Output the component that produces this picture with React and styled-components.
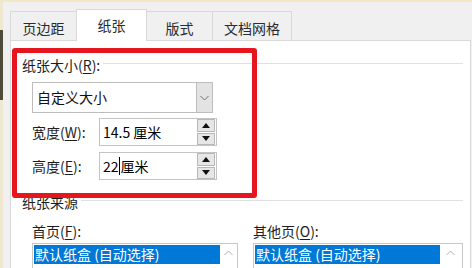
import React from "react";
import styled, { createGlobalStyle } from "styled-components";

const GlobalStyle = createGlobalStyle`
  html, body {
    margin: 0;
    padding: 0;
  }
  body {
    font-family: "Noto Sans CJK SC", "Noto Sans", sans-serif;
    background: #f0f0f0;
    overflow: hidden;
  }
  * {
    box-sizing: border-box;
  }
`;

const Frame = styled.div`
  display: flex;
  width: 472px;
  height: 268px;
  overflow: hidden;
`;

const Edge = styled.div`
  width: 3px;
  flex-shrink: 0;
  background: linear-gradient(
    to bottom,
    #efe7cf 0,
    #efe7cf 30px,
    #4d4b3a 30px,
    #4d4b3a 100px,
    #efe7cf 100px
  );
`;

const Dialog = styled.div`
  flex: 1;
  display: flex;
  flex-direction: column;
  background: #f0f0f0;
  border-top: 2px solid #f3e7c6;
  padding-left: 7px;
  padding-right: 2px;
`;

const TabRow = styled.div`
  display: flex;
  align-items: flex-end;
  height: 38px;
  flex-shrink: 0;
  position: relative;
  z-index: 2;
`;

const Tab = styled.div`
  width: ${(p) => p.$w}px;
  height: ${(p) => (p.$active ? 32 : 29)}px;
  margin-bottom: ${(p) => (p.$active ? -1 : 0)}px;
  margin-left: ${(p) => (p.$first ? 0 : -1)}px;
  padding-top: ${(p) => (p.$active ? 2 : 3)}px;
  border: 1px solid #d9d9d9;
  border-bottom: none;
  background: ${(p) => (p.$active ? "#ffffff" : "#f0f0f0")};
  color: #2b2b2b;
  font-size: 14px;
  line-height: 26px;
  text-align: center;
  position: relative;
  z-index: ${(p) => (p.$active ? 3 : 1)};
`;

const Panel = styled.div`
  flex: 1;
  position: relative;
  background: #ffffff;
  border: 1px solid #d9d9d9;
  padding: 14px 7px 0 11px;
`;

const GroupHeader = styled.div`
  display: flex;
  align-items: center;
  gap: 3px;
  height: 20px;
  margin-top: ${(p) => p.$top || 0}px;
`;

const GroupTitle = styled.span`
  font-size: 14px;
  line-height: 20px;
  color: #1e1e1e;
  white-space: nowrap;
`;

const Rule = styled.div`
  flex: 1;
  height: 1px;
  background: #e0e0e0;
  margin-top: -4px;
`;

const U = styled.span`
  text-decoration: underline;
  text-underline-offset: 2px;
`;

const Combo = styled.div`
  display: flex;
  width: 181px;
  height: 31px;
  margin: 7px 0 0 10px;
  border: 1px solid #bdbdbd;
  background: #ffffff;
`;

const ComboText = styled.div`
  flex: 1;
  padding-left: 4px;
  font-size: 14px;
  line-height: 29px;
  color: #111;
`;

const ComboButton = styled.div`
  width: 16px;
  background: #e3e3e3;
  border-left: 1px solid #bdbdbd;
  display: flex;
  align-items: center;
  justify-content: center;
`;

const FieldRow = styled.div`
  display: flex;
  align-items: center;
  margin: ${(p) => p.$top}px 0 0 10px;
`;

const FieldLabel = styled.div`
  width: 67px;
  font-size: 14px;
  line-height: 20px;
  color: #1e1e1e;
`;

const SpinBox = styled.div`
  display: flex;
  width: 118px;
  height: 28px;
  border: 1px solid #c4c4c4;
  background: #ffffff;
  padding: 0 1px 0 0;
`;

const SpinValue = styled.div`
  flex: 1;
  padding-left: 3px;
  font-size: 14px;
  line-height: 26px;
  color: #000;
  display: flex;
  align-items: center;
  white-space: pre;
`;

const Caret = styled.span`
  display: inline-block;
  width: 1px;
  height: 18px;
  background: #000;
  margin: 0 1px 0 0;
`;

const SpinButtons = styled.div`
  width: 18px;
  display: flex;
  flex-direction: column;
  gap: 1px;
`;

const SpinBtn = styled.div`
  flex: 1;
  background: #e6e6e6;
  border: 1px solid #b8b8b8;
  display: flex;
  align-items: center;
  justify-content: center;
`;

const ListColumns = styled.div`
  display: grid;
  grid-template-columns: 206px 210px;
  column-gap: 15px;
  margin: 9px 0 0 10px;
`;

const ListLabel = styled.div`
  font-size: 14px;
  line-height: 20px;
  color: #1e1e1e;
`;

const ListBox = styled.div`
  display: flex;
  height: 40px;
  margin-top: 2px;
  border: 1px solid #c8c8c8;
  padding: 1px;
  background: #ffffff;
`;

const ListItem = styled.div`
  flex: 1;
  height: 19px;
  background: #0078d7;
  color: #ffffff;
  font-size: 14px;
  line-height: 19px;
  padding-left: 1px;
  white-space: nowrap;
  overflow: hidden;
`;

const ListScroll = styled.div`
  width: ${(p) => p.$w}px;
  display: flex;
  justify-content: center;
  padding-top: 5px;
`;

const RedBox = styled.div`
  position: absolute;
  left: 1px;
  top: 7px;
  width: 245px;
  height: 150px;
  border: 5px solid #e5161d;
  border-radius: 3px;
  pointer-events: none;
  z-index: 5;
`;

const Chevron = ({ up, color = "#707070" }) => (
  <svg width="9" height="6" viewBox="0 0 9 6">
    <polyline
      points={up ? "0.5,5 4.5,1 8.5,5" : "0.5,1 4.5,5 8.5,1"}
      fill="none"
      stroke={color}
      strokeWidth="1"
    />
  </svg>
);

const Arrow = ({ up }) => (
  <svg width="8" height="5" viewBox="0 0 8 5">
    <polygon points={up ? "0,5 4,0 8,5" : "0,0 8,0 4,5"} fill="#111" />
  </svg>
);

const Spinner = ({ children }) => (
  <SpinBox>
    <SpinValue>{children}</SpinValue>
    <SpinButtons>
      <SpinBtn>
        <Arrow up />
      </SpinBtn>
      <SpinBtn>
        <Arrow />
      </SpinBtn>
    </SpinButtons>
  </SpinBox>
);

const tabs = [
  { label: "页边距", w: 67 },
  { label: "纸张", w: 71, active: true },
  { label: "版式", w: 67 },
  { label: "文档网格", w: 80 },
];

export default function App() {
  return (
    <>
      <GlobalStyle />
      <Frame>
        <Edge />
        <Dialog>
          <TabRow>
            {tabs.map((t, i) => (
              <Tab key={t.label} $w={t.w} $active={t.active} $first={i === 0}>
                {t.label}
              </Tab>
            ))}
          </TabRow>
          <Panel>
            <GroupHeader>
              <GroupTitle>
                纸张大小(<U>R</U>):
              </GroupTitle>
              <Rule />
            </GroupHeader>
            <Combo>
              <ComboText>自定义大小</ComboText>
              <ComboButton>
                <Chevron />
              </ComboButton>
            </Combo>
            <FieldRow $top={5}>
              <FieldLabel>
                宽度(<U>W</U>):
              </FieldLabel>
              <Spinner>14.5 厘米</Spinner>
            </FieldRow>
            <FieldRow $top={6}>
              <FieldLabel>
                高度(<U>E</U>):
              </FieldLabel>
              <Spinner>
                22<Caret />厘米
              </Spinner>
            </FieldRow>
            <GroupHeader $top={12}>
              <GroupTitle>纸张来源</GroupTitle>
              <Rule />
            </GroupHeader>
            <ListColumns>
              <div>
                <ListLabel>
                  首页(<U>F</U>):
                </ListLabel>
                <ListBox>
                  <ListItem>默认纸盒 (自动选择)</ListItem>
                  <ListScroll $w={16}>
                    <Chevron up color="#b0b0b0" />
                  </ListScroll>
                </ListBox>
              </div>
              <div>
                <ListLabel>
                  其他页(<U>O</U>):
                </ListLabel>
                <ListBox>
                  <ListItem>默认纸盒 (自动选择)</ListItem>
                  <ListScroll $w={21}>
                    <Chevron up color="#b0b0b0" />
                  </ListScroll>
                </ListBox>
              </div>
            </ListColumns>
            <RedBox />
          </Panel>
        </Dialog>
      </Frame>
    </>
  );
}
